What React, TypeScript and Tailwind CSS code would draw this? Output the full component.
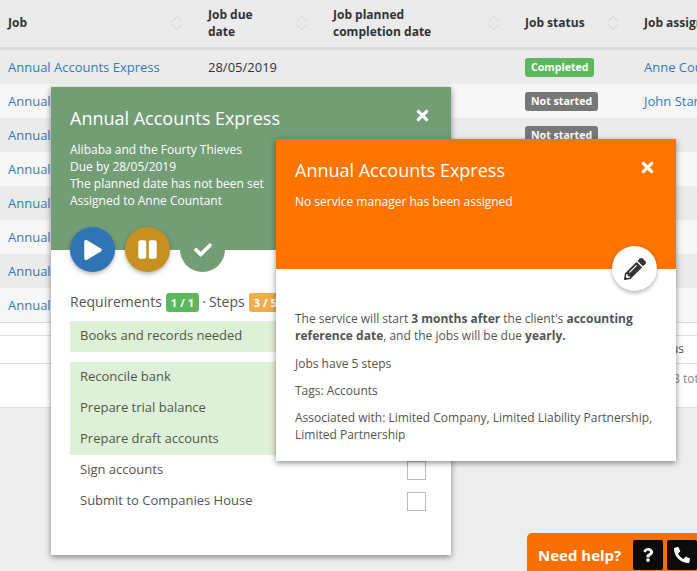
import React from 'react';
import { FaCheck, FaPause, FaPencilAlt, FaPhone, FaPlay, FaQuestion, FaTimes } from 'react-icons/fa';

const rows = [
  { status: 'Completed', assignee: 'Anne Countant', date: '28/05/2019' },
  { status: 'Not started', assignee: 'John Starter', date: '' },
  { status: 'Not started', assignee: '', date: '' },
  { status: '', assignee: '', date: '' },
  { status: '', assignee: '', date: '' },
  { status: '', assignee: '', date: '' },
  { status: '', assignee: '', date: '' },
  { status: '', assignee: '', date: '' },
];

function SortIcon() {
  return (
    <svg width="12" height="16" viewBox="0 0 12 16" fill="none" stroke="#d0d0d0" strokeWidth="1" className="shrink-0">
      <path d="M1 6.5 L6 1.5 L11 6.5" />
      <path d="M1 9.5 L6 14.5 L11 9.5" />
    </svg>
  );
}

function Header() {
  return (
    <div className="flex h-[50px] w-[900px] items-center border-b-[3px] border-[#dcdcdc] bg-[#ebebeb] pb-[2px] text-[12px] leading-[17px] font-bold text-[#333]">
      <div className="flex w-[200px] items-center justify-between pr-[17px] pl-2">
        <span>Job</span>
        <SortIcon />
      </div>
      <div className="flex w-[125px] items-center justify-between pr-[17px] pl-2">
        <span>Job due<br />date</span>
        <SortIcon />
      </div>
      <div className="flex w-[192px] items-center justify-between pr-[17px] pl-2">
        <span>Job planned<br />completion date</span>
        <SortIcon />
      </div>
      <div className="flex w-[119px] items-center justify-between pr-[17px] pl-2">
        <span>Job status</span>
        <SortIcon />
      </div>
      <div className="pl-2">Job assignee</div>
    </div>
  );
}

function Row({ row, even }: { row: (typeof rows)[number]; even: boolean }) {
  return (
    <div className={`flex h-[34px] w-[900px] items-center pt-[2px] text-[13px] ${even ? 'bg-[#ebebeb]' : 'bg-[#f7f7f7]'}`}>
      <div className="w-[200px] pl-2 text-[#337ab7]">Annual Accounts Express</div>
      <div className="w-[125px] pl-2 text-[#333]">{row.date}</div>
      <div className="w-[192px]" />
      <div className="flex w-[119px] pl-2">
        {row.status && (
          <span className={`-mt-[2px] rounded-[3px] px-[6px] text-[10.6px] leading-[19px] font-bold text-white ${row.status === 'Completed' ? 'bg-[#5cb85c]' : 'bg-[#777]'}`}>
            {row.status}
          </span>
        )}
      </div>
      <div className="pl-2 text-[#337ab7]">{row.assignee}</div>
    </div>
  );
}

function Check({ label, done }: { label: string; done?: boolean }) {
  return (
    <div className={`flex h-[31px] items-center justify-between pr-[6px] pl-[10px] text-[13px] ${done ? 'bg-[#dff0d8] text-[#4a5a48]' : 'text-[#555]'}`}>
      <span className="mb-[2px]">{label}</span>
      <span className={`h-[19px] w-[19px] border border-[#bbb] bg-white ${done ? 'hidden' : ''}`} />
    </div>
  );
}

function JobCard() {
  return (
    <div className="absolute top-[87px] left-[51px] h-[468px] w-[400px] bg-white shadow-[0_2px_6px_rgba(0,0,0,0.45)]">
      <div className="relative h-[163px] bg-[#729d75] px-[19px] pt-[19px] text-white">
        <h2 className="text-[18px] leading-[25px]">Annual Accounts Express</h2>
        <FaTimes className="absolute top-[20px] right-[20px] text-[17px]" />
        <p className="mt-[10px] text-[12px] leading-[17px]">
          Alibaba and the Fourty Thieves<br />
          Due by 28/05/2019<br />
          The planned date has not been set<br />
          Assigned to Anne Countant
        </p>
      </div>
      <div className="relative -mt-[23px] flex gap-[10px] pl-[19px]">
        <button className="flex h-[45px] w-[45px] items-center justify-center rounded-full bg-[#2f74b3] pl-[1px] text-[20px] text-white shadow-[0_2px_4px_rgba(0,0,0,0.3)]">
          <FaPlay />
        </button>
        <button className="flex h-[45px] w-[45px] items-center justify-center rounded-full bg-[#c79121] text-[21px] text-white shadow-[0_2px_4px_rgba(0,0,0,0.3)]">
          <FaPause />
        </button>
        <button className="flex h-[45px] w-[45px] items-center justify-center rounded-full bg-[#729d75] text-[18px] text-white">
          <FaCheck />
        </button>
      </div>
      <div className="mt-[21px] flex h-[19px] items-center px-[19px] text-[14px] text-[#555]">
        <span className="mb-[2px]">Requirements</span>
        <span className="ml-[4px] rounded-[3px] bg-[#5cb85c] px-[5px] text-[11px] leading-[19px] font-bold tracking-[0.1px] text-white">1 / 1</span>
        <span className="mx-[3px] mb-[2px]">·</span>
        <span className="mb-[2px]">Steps</span>
        <span className="ml-[4px] rounded-[3px] bg-[#f0ad4e] px-[5px] text-[11px] leading-[19px] font-bold tracking-[0.1px] text-white">3 / 5</span>
      </div>
      <div className="mt-[9px] px-[19px]">
        <Check label="Books and records needed" done />
        <div className="mt-[10px]">
          <Check label="Reconcile bank" done />
          <Check label="Prepare trial balance" done />
          <Check label="Prepare draft accounts" done />
          <Check label="Sign accounts" />
          <Check label="Submit to Companies House" />
        </div>
      </div>
    </div>
  );
}

function ServiceCard() {
  return (
    <div className="absolute top-[139px] left-[276px] h-[322px] w-[400px] bg-white shadow-[0_2px_6px_rgba(0,0,0,0.45)]">
      <div className="relative h-[130px] bg-[#ff7500] px-[19px] pt-[19px] text-white">
        <h2 className="text-[18px] leading-[25px]">Annual Accounts Express</h2>
        <FaTimes className="absolute top-[20px] right-[20px] text-[17px]" />
        <p className="mt-[10px] text-[12px] leading-[17px] font-medium">No service manager has been assigned</p>
        <button className="absolute top-[107px] right-[19px] flex h-[45px] w-[45px] items-center justify-center rounded-full bg-white text-[22px] text-[#333] shadow-[0_2px_4px_rgba(0,0,0,0.3)]">
          <FaPencilAlt />
        </button>
      </div>
      <div className="px-[19px] pt-[41px] text-[12px] leading-[17px] text-[#555]">
        <p>
          The service will start <b>3 months after</b> the client's <b>accounting reference date</b>, and the jobs will be due <b>yearly.</b>
        </p>
        <p className="mt-[11px]">Jobs have 5 steps</p>
        <p className="mt-[10px]">Tags: Accounts</p>
        <p className="mt-[10px]">Associated with: Limited Company, Limited Liability Partnership, Limited Partnership</p>
      </div>
    </div>
  );
}

export default function App() {
  return (
    <div className="relative h-[571px] w-[697px] overflow-hidden bg-[#eee] font-['Open_Sans',sans-serif]">
      <div className="overflow-hidden">
        <Header />
        {rows.map((row, i) => (
          <Row key={i} row={row} even={i % 2 === 0} />
        ))}
        <div className="h-[86px] border-y border-[#ddd] bg-white pt-[12px]">
          <div className="h-[29px] border-y border-[#ddd] pt-[4px] pl-[671px] text-[12px] text-[#555]">us</div>
          <div className="pt-[6px] pl-[673px] text-[12px] whitespace-nowrap text-[#888]">8 total</div>
        </div>
      </div>

      <JobCard />
      <ServiceCard />

      <div className="absolute top-[533px] left-[527px] flex h-[38px] w-[180px] items-start rounded-tl-[5px] bg-[#f97000] pt-[7px] pl-[11px] text-white">
        <span className="mt-[3px] w-[95px] text-[15px] leading-[24px] font-bold">Need help?</span>
        <span className="flex h-[30px] w-[30px] items-center justify-center rounded-[2px] bg-[#0b0b0b] text-[14px]"><FaQuestion /></span>
        <span className="ml-[4px] flex h-[30px] w-[30px] items-center justify-center rounded-[2px] bg-[#0b0b0b] text-[16px]"><FaPhone className="-scale-x-100" /></span>
      </div>
    </div>
  );
}
